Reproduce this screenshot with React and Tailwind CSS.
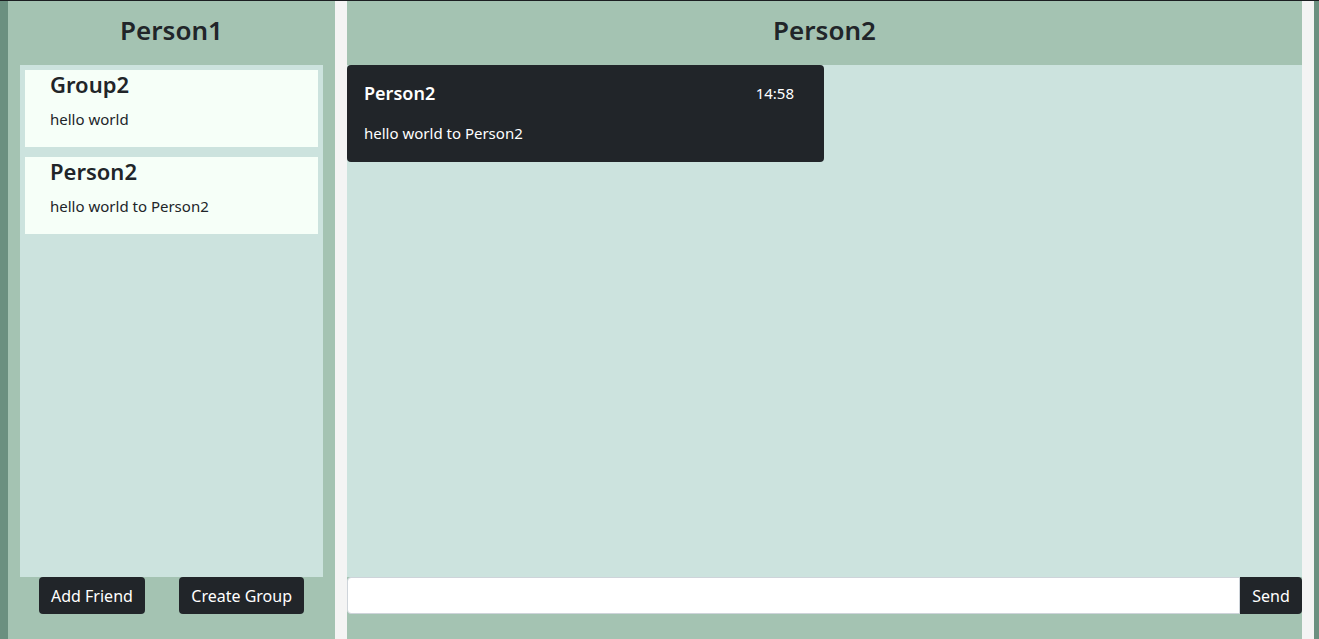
const chats = [
  { name: 'Group2', last: 'hello world' },
  { name: 'Person2', last: 'hello world to Person2' },
];

const messages = [{ from: 'Person2', time: '14:58', text: 'hello world to Person2' }];

export default function App() {
  return (
    <div className="h-[639px] w-[1319px] overflow-hidden flex flex-col bg-[#6b9080] text-[#212529]" style={{ fontFamily: '"Noto Sans", sans-serif' }}>
      <div className="h-px bg-[#1b1e21] shrink-0" />
      <div className="flex flex-1 min-h-0">
        {/* sidebar */}
        <aside className="ml-2 w-[327px] bg-[#a4c3b2] flex flex-col">
          <h2 className="h-[64px] pb-[6px] flex items-center justify-center text-[26px] font-semibold">Person1</h2>
          <div className="mx-3 h-[512px] bg-[#cce3de] p-[5px] flex flex-col gap-[10px]">
            {chats.map((c) => (
              <div key={c.name} className="h-[77px] bg-[#f6fff8] pl-[25px] pt-[1px]">
                <h3 className="text-[22px] font-semibold leading-[26px]">{c.name}</h3>
                <p className="mt-[12px] text-[15px] leading-[20px]">{c.last}</p>
              </div>
            ))}
          </div>
          <div className="flex justify-between px-[31px]">
            <button className="h-[37px] px-3 rounded bg-[#212529] text-white text-[16px]">Add Friend</button>
            <button className="h-[37px] px-3 rounded bg-[#212529] text-white text-[16px]">Create Group</button>
          </div>
        </aside>
        <div className="w-3 bg-[#f4f4f4]" />
        {/* chat */}
        <main className="w-[955px] bg-[#a4c3b2] flex flex-col">
          <h2 className="h-[64px] pb-[6px] flex items-center justify-center text-[26px] font-semibold">Person2</h2>
          <div className="h-[512px] bg-[#cce3de]">
            {messages.map((m, i) => (
              <div key={i} className="w-[477px] h-[97px] rounded bg-[#212529] text-white px-[17px] pt-[16px]">
                <div className="flex justify-between pr-[13px]">
                  <span className="text-[18px] font-semibold leading-[24px]">{m.from}</span>
                  <span className="text-[15px] leading-[24px]">{m.time}</span>
                </div>
                <p className="mt-[18px] text-[15px] leading-[20px]">{m.text}</p>
              </div>
            ))}
          </div>
          <div className="flex h-[37px]">
            <input className="flex-1 bg-white border border-[#ced4da] rounded-l px-3 outline-none" />
            <button className="w-[62px] rounded-r bg-[#212529] text-white text-[16px]">Send</button>
          </div>
        </main>
        <div className="w-3 bg-[#f4f4f4]" />
      </div>
    </div>
  );
}
